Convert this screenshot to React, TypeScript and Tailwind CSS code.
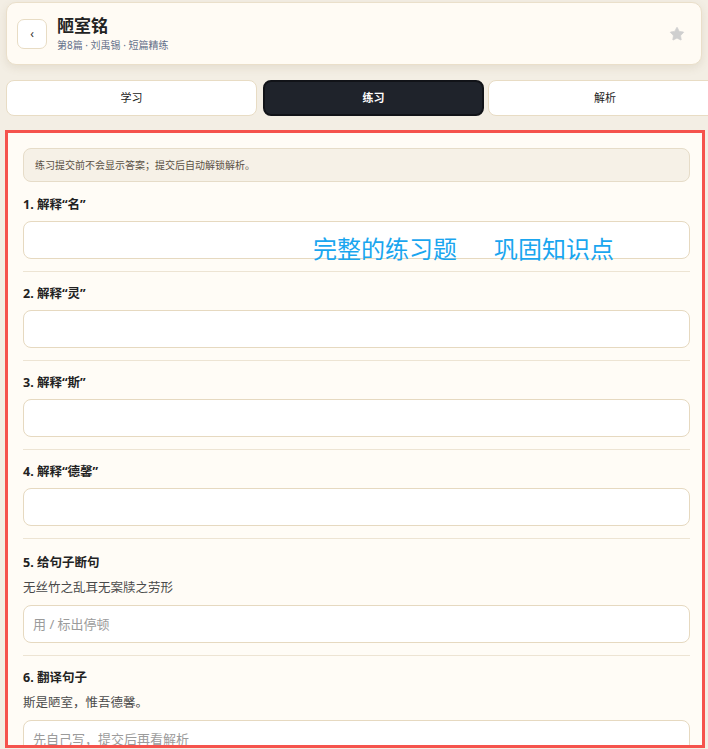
import { Star } from "lucide-react";

type Question = {
  label: string;
  sentence?: string;
  placeholder?: string;
};

const questions: Question[] = [
  { label: "1. 解释“名”" },
  { label: "2. 解释“灵”" },
  { label: "3. 解释“斯”" },
  { label: "4. 解释“德馨”" },
  { label: "5. 给句子断句", sentence: "无丝竹之乱耳无案牍之劳形", placeholder: "用 / 标出停顿" },
  { label: "6. 翻译句子", sentence: "斯是陋室，惟吾德馨。", placeholder: "先自己写，提交后再看解析" },
];

export default function App() {
  return (
    <div
      className="relative w-[708px] h-[749px] overflow-hidden bg-[#f3eee4] text-[#1f2328]"
      style={{ fontFamily: '"Noto Sans", "Noto Sans CJK SC", sans-serif' }}
    >
      {/* HEADER */}
      <div className="mx-[6px] mt-[2px] h-[63px] rounded-[10px] border border-[#eadfca] bg-[#fffbf4] shadow-[0_3px_8px_rgba(120,100,60,0.12)] flex items-center pl-[10px] pr-[16px]">
        <button className="w-[30px] h-[30px] rounded-[7px] border border-[#e8dcc4] bg-white flex items-center justify-center text-[12px] leading-none text-[#333]">
          ‹
        </button>
        <div className="ml-[10px] flex flex-col">
          <h1 className="text-[17px] leading-[22px] font-bold text-[#222]">陋室铭</h1>
          <p className="text-[10px] leading-[14px] text-[#64708a] mt-[1px]">第8篇 · 刘禹锡 · 短篇精练</p>
        </div>
        <div className="flex-1" />
        <Star className="w-[16px] h-[16px] text-[#cfcfcf] fill-[#cfcfcf]" strokeWidth={1} />
      </div>

      {/* TABS */}
      <div className="mt-[15px] ml-[6px] flex h-[36px]">
        <div className="w-[251px] shrink-0 rounded-[8px] border border-[#e8dcc4] bg-white flex items-center justify-center text-[11px] text-[#222]">
          学习
        </div>
        <div className="ml-[6px] w-[221px] shrink-0 rounded-[8px] border-2 border-[#111318] bg-[#1f232b] flex items-center justify-center text-[11px] font-bold text-white">
          练习
        </div>
        <div className="ml-[4px] w-[234px] shrink-0 rounded-[8px] border border-[#e8dcc4] bg-white flex items-center justify-center text-[11px] text-[#222]">
          解析
        </div>
      </div>

      {/* PRACTICE PANEL */}
      <div className="mt-[14px] ml-[5px] w-[700px] h-[618px] overflow-hidden border-[3px] border-[#f5534d] bg-[#fffcf6] pl-[15px] pr-[12px] pt-[15px]">
        <div className="h-[34px] rounded-[8px] border border-[#e6dcc8] bg-[#f6f1e7] flex items-center px-[11px] text-[10px] text-[#5a5044]">
          练习提交前不会显示答案；提交后自动解锁解析。
        </div>

        {questions.map((q, i) => (
          <div key={i} className={i === 0 ? "pt-[14px]" : i === 4 ? "pt-[15px]" : "pt-[13px]"}>
            <div className="text-[12.5px] leading-[18px] font-bold text-[#222]">{q.label}</div>
            {q.sentence && (
              <div className="mt-[7px] text-[12.5px] leading-[18px] text-[#4a4a4a]">{q.sentence}</div>
            )}
            <input
              className={`${q.sentence ? "mt-[8px]" : "mt-[7px]"} w-full h-[38px] rounded-[8px] border border-[#e6d9c0] bg-white px-[9px] text-[13px] placeholder:text-[#9b9b9b] outline-none`}
              placeholder={q.placeholder ?? ""}
            />
            <div className="mt-[12px] h-px bg-[#ede4d3]" />
          </div>
        ))}
      </div>

      {/* ANNOTATION */}
      <div className="absolute left-[313px] top-[234px] flex gap-[37px] text-[24px] leading-[30px] text-[#1aa6ef]">
        <span>完整的练习题</span>
        <span>巩固知识点</span>
      </div>
    </div>
  );
}
